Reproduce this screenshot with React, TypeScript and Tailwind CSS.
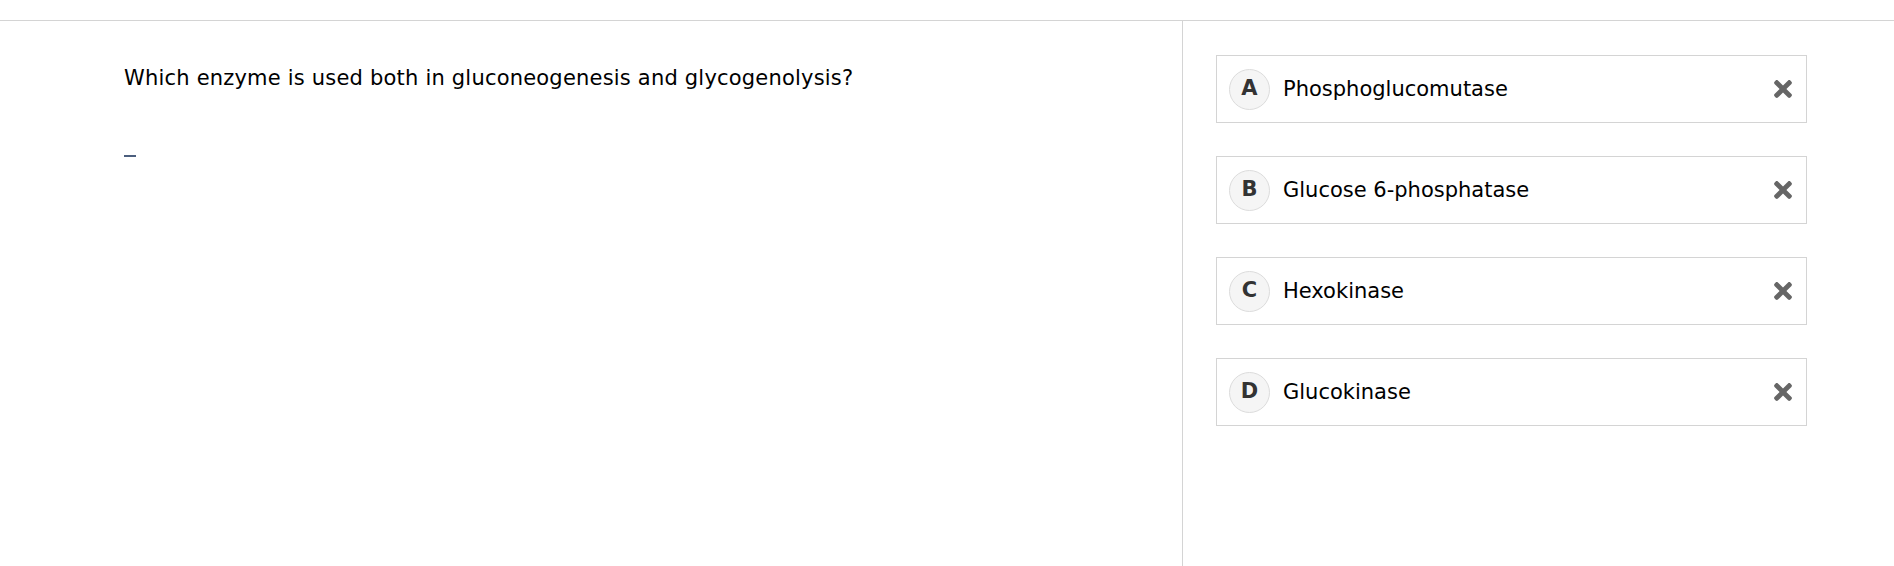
import { FaTimes } from "react-icons/fa";

const options = [
  { letter: "A", label: "Phosphoglucomutase" },
  { letter: "B", label: "Glucose 6-phosphatase" },
  { letter: "C", label: "Hexokinase" },
  { letter: "D", label: "Glucokinase" },
];

function OptionCard({ letter, label }: { letter: string; label: string }) {
  return (
    <div className="flex items-center w-[591px] h-[68px] border border-[#d4d4d4] bg-white pl-[12px] pr-[14px]">
      <div className="flex items-center justify-center w-[41px] h-[41px] rounded-full border border-[#dcdcdc] bg-[#f5f5f5] text-[21px] font-bold text-[#333]">
        {letter}
      </div>
      <span className="ml-[13px] mt-[2px] flex-1 text-[21px] text-black">{label}</span>
      <FaTimes className="text-[#666] w-[18px] h-[26px]" />
    </div>
  );
}

export default function App() {
  return (
    <div className="w-[1894px] h-[566px] bg-white flex flex-col font-['DejaVu_Sans',sans-serif]">
      <div className="h-[21px] border-b border-[#d4d4d4] shrink-0" />
      <div className="flex flex-1">
        <div className="w-[1183px] border-r border-[#d4d4d4] pl-[124px] pt-[42px]">
          <p className="text-[21px] leading-[30px] tracking-[0.2px] text-black">
            Which enzyme is used both in gluconeogenesis and glycogenolysis?
          </p>
          <div className="mt-[62px] w-[12px] h-[2px] bg-[#4b5e7e]" />
        </div>
        <div className="flex flex-col gap-[33px] pl-[33px] pt-[34px]">
          {options.map((o) => (
            <OptionCard key={o.letter} letter={o.letter} label={o.label} />
          ))}
        </div>
      </div>
    </div>
  );
}
